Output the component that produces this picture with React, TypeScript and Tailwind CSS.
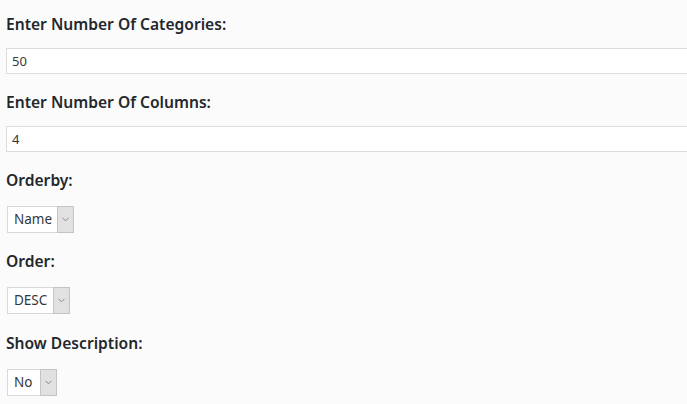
import React, { useState } from "react";

const Chevron = () => (
  <svg width="7" height="5" viewBox="0 0 7 5" fill="none">
    <path d="M0.5 0.8 L3.5 3.8 L6.5 0.8" stroke="#8a8a8a" strokeWidth="1" />
  </svg>
);

interface SelectProps {
  value: string;
  options: string[];
  width: string;
  onChange: (v: string) => void;
}

const FakeSelect: React.FC<SelectProps> = ({ value, options, width, onChange }) => (
  <div className={`relative flex h-[27px] border border-[#d9d9d9] bg-white ${width}`}>
    <select
      value={value}
      onChange={(e) => onChange(e.target.value)}
      className="h-full flex-1 appearance-none bg-transparent pl-[6px] text-[13.5px] text-[#32373c] outline-none"
    >
      {options.map((o) => (
        <option key={o}>{o}</option>
      ))}
    </select>
    <div className="pointer-events-none -my-px -mr-px flex w-[17px] items-center justify-center border border-[#c4c4c4] bg-[#e1e1e1]">
      <Chevron />
    </div>
  </div>
);

const App: React.FC = () => {
  const [categorias, setCategorias] = useState("50");
  const [columnas, setColumnas] = useState("4");
  const [orderby, setOrderby] = useState("Name");
  const [order, setOrder] = useState("DESC");
  const [desc, setDesc] = useState("No");

  return (
    <div className="min-h-screen bg-[#fbfbfb] px-[6px] pt-[12px] font-['Noto_Sans',sans-serif] text-[#23282d] overflow-hidden">
      <div className="w-[720px]">
        <label className="block text-[15.6px] font-semibold leading-[24px]">
          Enter Number Of Categories:
        </label>
        <input
          value={categorias}
          onChange={(e) => setCategorias(e.target.value)}
          className="mt-[12px] block h-[26px] w-full border border-[#dcdcdc] bg-white px-[5px] text-[13px] text-[#32373c] outline-none"
        />

        <label className="mt-[16px] block text-[15.6px] font-semibold leading-[24px]">
          Enter Number Of Columns:
        </label>
        <input
          value={columnas}
          onChange={(e) => setColumnas(e.target.value)}
          className="mt-[12px] block h-[26px] w-full border border-[#dcdcdc] bg-white px-[5px] text-[13px] text-[#32373c] outline-none"
        />
      </div>

      <label className="mt-[16px] block text-[15.6px] font-semibold leading-[24px]">Orderby:</label>
      <div className="mt-[14px] pl-px">
        <FakeSelect value={orderby} options={["Name", "ID", "Count", "Slug"]} width="w-[67px]" onChange={setOrderby} />
      </div>

      <label className="mt-[16px] block text-[15.6px] font-semibold leading-[24px]">Order:</label>
      <div className="mt-[14px] pl-px">
        <FakeSelect value={order} options={["DESC", "ASC"]} width="w-[63px]" onChange={setOrder} />
      </div>

      <label className="mt-[17px] block text-[15.6px] font-semibold leading-[24px]">Show Description:</label>
      <div className="mt-[14px] pl-px">
        <FakeSelect value={desc} options={["No", "Yes"]} width="w-[50px]" onChange={setDesc} />
      </div>
    </div>
  );
};

export default App;
